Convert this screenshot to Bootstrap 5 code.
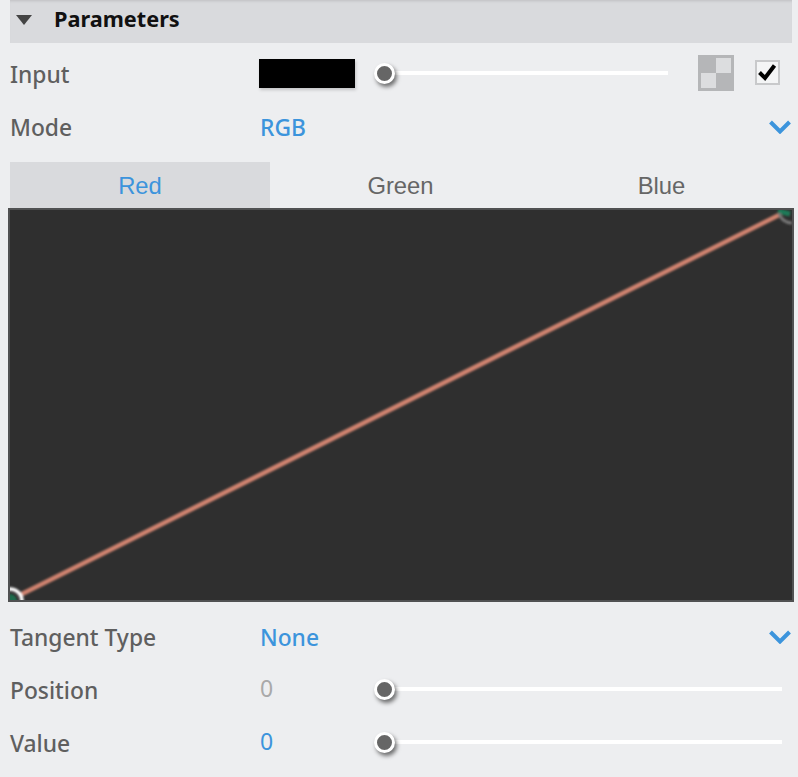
<!DOCTYPE html>
<html lang="en">
<head>
<meta charset="utf-8">
<title>Parameters</title>
<link rel="stylesheet" href="https://cdn.jsdelivr.net/npm/bootstrap@5.3.0/dist/css/bootstrap.min.css">
<style>
html, body { height: 100%; }
body { background: #edeef0; overflow: hidden; font-family: "Noto Sans", "Open Sans", sans-serif; }
.panel-wrap { width: 782px; margin-left: 10px; }
.param-head { height: 43px; background: #d9dadd; box-shadow: inset 0 3px 3px -2px rgba(0,0,0,.12); margin-bottom: 5px; }
.head-tri { margin-left: 6px; margin-right: 22px; display: block; margin-top: -4px; }
.head-title { font-size: 21.7px; font-weight: 700; color: #111; line-height: 1; padding-bottom: 5px; }
.param-row { height: 53px; }
.param-label { width: 250px; flex: none; font-size: 22.8px; font-weight: 500; color: #5f5f5f; line-height: 1; padding-top: 1px; }
.param-val { font-size: 22.8px; font-weight: 500; color: #3c94dc; line-height: 1; padding-top: 1px; }
.param-num { width: 114px; flex: none; font-size: 23px; line-height: 1; margin-top: -5px; }
.num-off { color: #a9a9a9; }
.num-on { color: #3c94dc; }
.swatch { width: 96px; height: 29px; background: #000; flex: none; box-shadow: 1px 2px 3px rgba(0,0,0,.18); margin-left: -1px; margin-top: -3px; margin-right: 19px; }
.knob { width: 21px; height: 21px; border-radius: 50%; background: #666; border: 3px solid #fff; flex: none; box-shadow: 2px 3px 4px rgba(0,0,0,.55); margin-top: -3px; position: relative; z-index: 1; }
.rail { height: 4px; background: #fff; margin-top: -3px; margin-left: -1px; }
.rail-short { width: 274px; flex: none; }
.rail-long { flex: 1 1 auto; margin-right: 10px; }
.checker { width: 36px; height: 36px; flex: none; background: #b5b6b8; margin-left: 30px; margin-top: -3px; padding: 3px; display: grid; grid-template-columns: 15px 15px; grid-template-rows: 15px 15px; }
.checker i { display: block; }
.checker i.lit { background: #dcdddf; }
.tickbox { width: 25px; height: 25px; flex: none; border: 2px solid #c8c9cb; background: #f4f5f6; margin-left: 21px; margin-top: -5px; display: block; }
.chev { display: block; margin-right: 1px; margin-left: auto; margin-top: -2px; }
.tab-strip { height: 46px; margin-top: 8px; }
.tab-cell { flex: 1 1 0; font-family: "Liberation Sans", Arial, sans-serif; font-size: 23.8px; color: #666; line-height: 1; padding-top: 2px; }
.tab-on { flex: 0 0 260px; background: #d9dadd; color: #3c94dc; }
.curve-box { width: 786px; height: 394px; margin-left: -2px; background: #2f2f2f; border: 2px solid #505152; margin-bottom: 9px; overflow: hidden; }
.curve-box svg { display: block; }
</style>
</head>
<body>
<div class="panel-wrap">
  <div class="param-head d-flex align-items-center">
    <svg class="head-tri" width="16" height="10" viewBox="0 0 16 10"><path d="M0 0H16L8 10Z" fill="#444"/></svg>
    <span class="head-title">Parameters</span>
  </div>

  <div class="param-row d-flex align-items-center">
    <div class="param-label">Input</div>
    <div class="swatch"></div>
    <div class="knob"></div>
    <div class="rail rail-short"></div>
    <div class="checker"><i></i><i class="lit"></i><i class="lit"></i><i></i></div>
    <svg class="tickbox" viewBox="0 0 21 21"><path d="M2.5 10.5L8 16L17.5 3.5" fill="none" stroke="#000" stroke-width="4"/></svg>
  </div>

  <div class="param-row d-flex align-items-center">
    <div class="param-label">Mode</div>
    <div class="param-val">RGB</div>
    <svg class="chev" width="22" height="14" viewBox="0 0 22 14"><path d="M1.5 2L11 11.5L20.5 2" fill="none" stroke="#3c94dc" stroke-width="4"/></svg>
  </div>

  <div class="tab-strip d-flex">
    <div class="tab-cell tab-on d-flex align-items-center justify-content-center">Red</div>
    <div class="tab-cell d-flex align-items-center justify-content-center">Green</div>
    <div class="tab-cell d-flex align-items-center justify-content-center">Blue</div>
  </div>

  <div class="curve-box">
    <svg width="782" height="390" viewBox="10 210 782 390">
      <defs><filter id="soft" x="-5%" y="-5%" width="110%" height="110%"><feGaussianBlur stdDeviation="0.9"/></filter></defs>
      <g filter="url(#soft)">
        <line x1="20" y1="595" x2="781" y2="214" stroke="#d08370" stroke-width="4.6"/>
        <circle cx="10" cy="601" r="7" fill="#1f6b4c"/>
        <circle cx="10" cy="601" r="12" fill="none" stroke="#ffffff" stroke-width="3.5"/>
        <path d="M778 211L790 214" stroke="#1f7a58" stroke-width="5" fill="none"/>
        <path d="M779 213A13 13 0 0 0 792 223" stroke="#777" stroke-width="3" fill="none"/>
      </g>
    </svg>
  </div>

  <div class="param-row d-flex align-items-center">
    <div class="param-label">Tangent Type</div>
    <div class="param-val">None</div>
    <svg class="chev" width="22" height="14" viewBox="0 0 22 14"><path d="M1.5 2L11 11.5L20.5 2" fill="none" stroke="#3c94dc" stroke-width="4"/></svg>
  </div>

  <div class="param-row d-flex align-items-center">
    <div class="param-label">Position</div>
    <div class="param-num num-off">0</div>
    <div class="knob"></div>
    <div class="rail rail-long"></div>
  </div>

  <div class="param-row d-flex align-items-center">
    <div class="param-label">Value</div>
    <div class="param-num num-on">0</div>
    <div class="knob"></div>
    <div class="rail rail-long"></div>
  </div>
</div>
<script src="https://cdn.jsdelivr.net/npm/bootstrap@5.3.0/dist/js/bootstrap.bundle.min.js"></script>
</body>
</html>
